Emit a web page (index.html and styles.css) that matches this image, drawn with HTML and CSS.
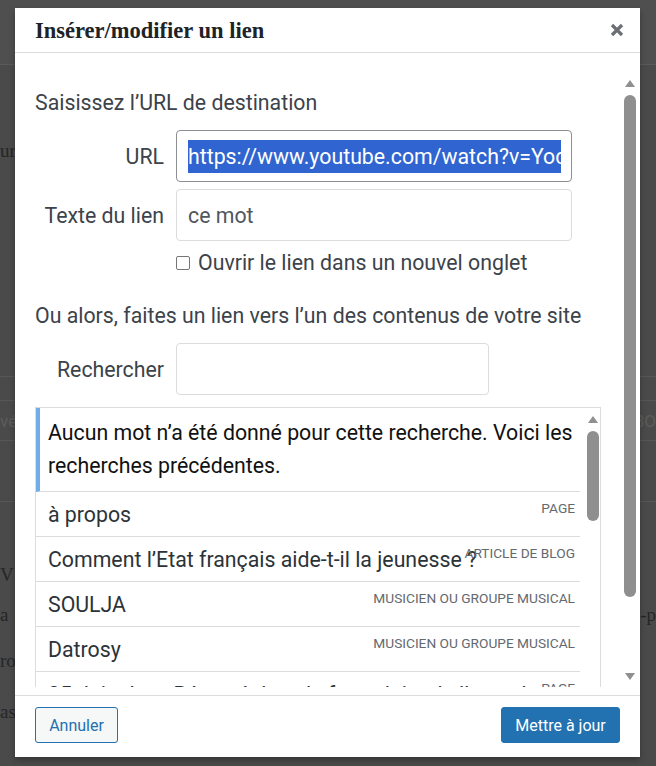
FILE: index.html
```html
<!DOCTYPE html>
<html lang="fr">
<head>
<meta charset="utf-8">
<title>Insérer/modifier un lien</title>
<link rel="stylesheet" href="styles.css">
</head>
<body>
<div class="page">
  <div class="pg-top"></div>
  <div class="pg-gap g1"></div>
  <div class="pg-row r-ur"><span>ur</span><span></span></div>
  <div class="pg-gap g2"></div>
  <div class="pg-band b1"></div>
  <div class="pg-band b2"><span class="faint">vé</span><span class="faint">BO</span></div>
  <div class="pg-band b3"></div>
  <div class="pg-gap g3"></div>
  <div class="pg-row r-v"><span>V</span><span></span></div>
  <div class="pg-row r-a"><span>a</span><span>-p</span></div>
  <div class="pg-row r-roa"><span>roa</span><span></span></div>
  <div class="pg-row r-as"><span>as</span><span></span></div>
</div>

<div class="modal">
  <div class="modal-head">
    <h1 class="modal-title">Insérer/modifier un lien</h1>
    <span class="close" aria-label="Fermer">
      <svg width="14" height="14" viewBox="0 0 14 14"><path d="M2 2 L12 12 M12 2 L2 12" stroke="#6b6f74" stroke-width="3.2" stroke-linecap="butt" fill="none"/></svg>
    </span>
  </div>

  <div class="modal-body">
    <div class="content">
      <p class="heading">Saisissez l’URL de destination</p>

      <div class="field">
        <span class="label">URL</span>
        <div class="input url"><div class="clip"><span class="sel">https://www.youtube.com/watch?v=YodHgCU0JTc</span></div></div>
      </div>
      <div class="field f2">
        <span class="label">Texte du lien</span>
        <div class="input"><div class="clip"><span class="val">ce mot</span></div></div>
      </div>
      <div class="check-row">
        <span class="box"></span>
        <span class="check-text">Ouvrir le lien dans un nouvel onglet</span>
      </div>

      <p class="heading h2">Ou alors, faites un lien vers l’un des contenus de votre site</p>

      <div class="field f3">
        <span class="label">Rechercher</span>
        <div class="input search"></div>
      </div>

      <div class="results">
        <div class="items">
          <div class="notice">Aucun mot n’a été donné pour cette recherche. Voici les recherches précédentes.</div>
          <div class="item"><span class="title">à propos</span><span class="type">Page</span></div>
          <div class="item"><span class="title">Comment l’Etat français aide-t-il la jeunesse ?</span><span class="type">Article de blog</span></div>
          <div class="item"><span class="title">SOULJA</span><span class="type">Musicien ou groupe musical</span></div>
          <div class="item"><span class="title">Datrosy</span><span class="type">Musicien ou groupe musical</span></div>
          <div class="item"><span class="title">05 Juin Jeu : Réservé dans le formulaire de l’agenda</span><span class="type">Page</span></div>
        </div>
        <div class="scroll inner">
          <span class="arrow up"></span>
          <span class="thumb"></span>
        </div>
      </div>
    </div>
    <div class="scroll outer">
      <span class="arrow up"></span>
      <span class="thumb"></span>
      <span class="spacer"></span>
      <span class="arrow down"></span>
    </div>
  </div>

  <div class="modal-foot">
    <button class="btn secondary">Annuler</button>
    <button class="btn primary">Mettre à jour</button>
  </div>
</div>
</body>
</html>
```

FILE: styles.css
```css
* { box-sizing: border-box; }
html, body { margin: 0; padding: 0; }
body {
  width: 656px;
  height: 766px;
  overflow: hidden;
  background: #4a4a4a;
  position: relative;
  font-family: Roboto, "Liberation Sans", sans-serif;
}

/* background page (under overlay) */
.page {
  display: flex;
  flex-direction: column;
  font-family: "Liberation Serif", serif;
  font-size: 19px;
  color: #262626;
}
.pg-top { height: 65px; background: #4f4f4f; border-bottom: 1px solid #5a5a5a; }
.pg-gap.g1 { height: 75px; }
.pg-row { display: flex; justify-content: space-between; align-items: center; }
.r-ur { height: 22px; }
.pg-gap.g2 { height: 214px; }
.pg-band { border-top: 1px solid #575757; }
.b1 { height: 24px; }
.b2 { height: 40px; display: flex; justify-content: space-between; align-items: center; font-family: Roboto, sans-serif; font-size: 17px; }
.faint { color: #5c5c5c; }
.b3 { height: 62px; border-bottom: 1px solid #575757; }
.pg-gap.g3 { height: 60px; }
.r-v { height: 26px; }
.r-a { height: 54px; }
.r-roa { height: 38px; }
.r-as { height: 64px; }

/* modal */
.modal {
  position: absolute;
  left: 15px;
  top: 8px;
  width: 625px;
  height: 749px;
  background: #fff;
  display: flex;
  flex-direction: column;
  box-shadow: 0 3px 6px rgba(0,0,0,0.3);
}
.modal-head {
  height: 45px;
  border-bottom: 1px solid #dcdcde;
  display: flex;
  align-items: center;
  justify-content: space-between;
  padding: 0 16px 0 20px;
  flex: none;
}
.modal-title {
  margin: 0;
  font-family: "Liberation Serif", serif;
  font-weight: bold;
  font-size: 22.5px;
  color: #1d2327;
  line-height: 26px;
  padding-top: 1px;
}
.close { display: flex; width: 14px; height: 14px; }

.modal-body {
  flex: 1;
  display: flex;
  overflow: hidden;
  padding-right: 4px;
}
.content {
  flex: 1;
  padding: 37px 0 0 20px;
  color: #2c3338;
  font-size: 21.3px;
}
.heading { margin: 0; line-height: 26px; color: #3c434a; }
.field { display: flex; align-items: center; gap: 12px; margin-top: 14px; }
.field.f2 { margin-top: 7px; }
.label { width: 129px; text-align: right; color: #3c434a; }
.input {
  width: 396px;
  height: 52px;
  border: 1px solid #dcdcde;
  border-radius: 4px;
  padding: 0 10px 0 11px;
  display: flex;
  align-items: center;
  font-size: 21.3px;
}
.input.url { border-color: #8c8f94; }
.clip { width: 100%; overflow: hidden; white-space: nowrap; }
.sel { display: inline-block; background: #3064d0; color: #fff; line-height: 33px; }
.val { color: #50575e; line-height: 33px; }
.input.search { width: 313px; }

.check-row { display: flex; align-items: center; gap: 8px; margin: 9px 0 0 141px; line-height: 26px; }
.box { width: 14px; height: 14px; border: 1px solid #767676; border-radius: 2px; background: #fff; }
.check-text { color: #3c434a; }
.heading.h2 { margin-top: 27px; }
.field.f3 { margin-top: 14px; }

.results {
  margin-top: 12px;
  width: 566px;
  height: 280px;
  border: 1px solid #dcdcde;
  border-bottom: none;
  overflow: hidden;
  display: flex;
}
.items { width: 544px; flex: none; }
.notice {
  border-left: 4px solid #72aee6;
  border-bottom: 1px solid #dcdcde;
  padding: 8px 6px 9px 8px;
  font-size: 21.3px;
  line-height: 33px;
  color: #111;
}
.item {
  height: 45px;
  border-bottom: 1px solid #dcdcde;
  display: grid;
  padding: 0 5px 0 12px;
}
.item > span { grid-area: 1 / 1; }
.title { align-self: center; font-size: 21.3px; color: #2c3338; white-space: nowrap; }
.type {
  justify-self: end;
  align-self: start;
  margin-top: 8px;
  font-size: 13.7px;
  line-height: 17px;
  text-transform: uppercase;
  color: #646970;
}

.scroll { display: flex; flex-direction: column; align-items: center; }
.arrow { width: 0; height: 0; border-left: 5px solid transparent; border-right: 5px solid transparent; }
.arrow.up { border-bottom: 7px solid #8f8f8f; }
.arrow.down { border-top: 7px solid #8f8f8f; }
.thumb { width: 12px; border-radius: 6px; background: #8f8f8f; margin-top: 8px; }
.scroll.outer { width: 12px; padding-top: 27px; padding-bottom: 15px; }
.scroll.outer .thumb { height: 502px; }
.spacer { flex: 1; }
.scroll.inner { width: 22px; padding: 8px 3px 0 7px; }
.scroll.inner .thumb { height: 90px; }

.modal-foot {
  flex: none;
  height: 62px;
  border-top: 1px solid #dcdcde;
  display: flex;
  justify-content: space-between;
  align-items: flex-start;
  padding: 11px 20px 0 20px;
}
.btn {
  height: 36px;
  border-radius: 3px;
  font-family: Roboto, "Liberation Sans", sans-serif;
  font-size: 16px;
  padding: 0 13px;
  border: 1px solid #2271b1;
}
.btn.secondary { background: #f6f7f7; color: #2271b1; width: 83px; }
.btn.primary { background: #2271b1; color: #fff; width: 119px; }
```
